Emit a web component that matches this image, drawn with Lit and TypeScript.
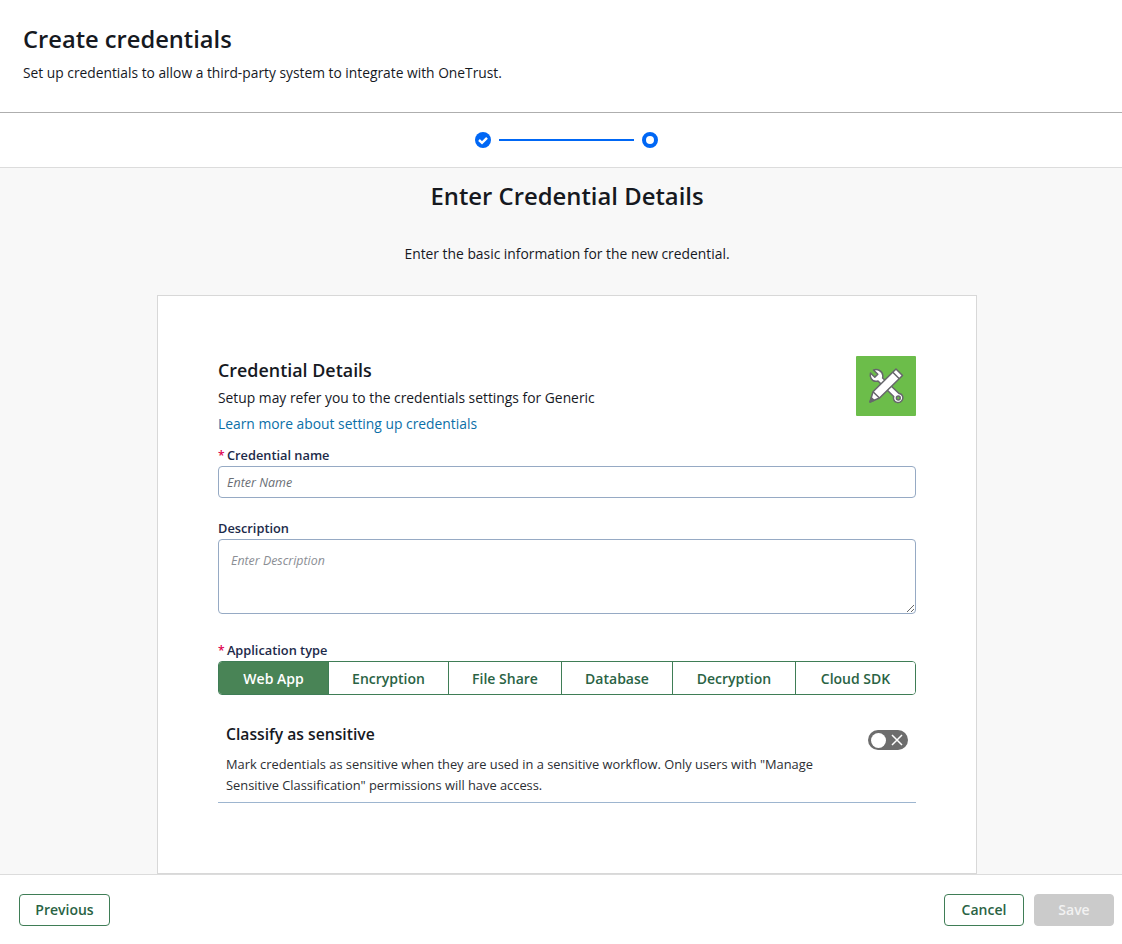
import { LitElement, html, css } from 'lit';
import { customElement, state } from 'lit/decorators.js';

const APP_TYPES = ['Web App', 'Encryption', 'File Share', 'Database', 'Decryption', 'Cloud SDK'];
const TAB_WIDTHS = [109, 120, 113, 111, 123, 120];

@customElement('app-root')
export class AppRoot extends LitElement {
  @state() appType = 'Web App';

  static styles = css`
    :host {
      display: flex;
      flex-direction: column;
      height: 944px;
      overflow: hidden;
      background: #fff;
      color: #16191f;
      font-family: 'Open Sans', 'Noto Sans', sans-serif;
      font-size: 13.85px;
    }
    * { box-sizing: border-box; }

    .header {
      height: 113px;
      padding: 24px 23px 0;
      border-bottom: 1px solid #aeaeae;
      flex: none;
    }
    .header h1 {
      margin: 0;
      font-size: 23.7px;
      line-height: 30px;
      font-weight: 600;
    }
    .header p {
      margin: 7px 0 0;
      line-height: 24px;
      font-size: 13.8px;
    }

    .stepper {
      height: 55px;
      flex: none;
      border-bottom: 1px solid #dcdcdc;
      display: flex;
      align-items: center;
      justify-content: center;
      gap: 8px;
      padding-left: 11px;
    }
    .stepper svg { display: block; }
    .step-line { width: 135px; height: 2px; background: #0067f5; }

    .body {
      flex: 1;
      min-height: 0;
      overflow: hidden;
      background: #f8f8f8;
      display: flex;
      flex-direction: column;
      align-items: center;
      padding-left: 12px;
    }
    .body h2 {
      margin: 12px 0 0;
      font-size: 23.85px;
      line-height: 32px;
      font-weight: 600;
    }
    .intro {
      margin: 30px 0 0;
      line-height: 24px;
    }

    .card {
      width: 820px;
      margin-top: 29px;
      flex: none;
      background: #fff;
      border: 1px solid #d8d8d8;
      padding: 60px 60px 70px;
    }
    .card-top {
      display: flex;
      justify-content: space-between;
      align-items: flex-start;
    }
    .card-top h3 {
      margin: 0;
      font-size: 17.9px;
      line-height: 28px;
      font-weight: 600;
    }
    .card-top p { margin: 2px 0 0; line-height: 24px; }
    .card-top a {
      display: block;
      margin-top: 2px;
      line-height: 24px;
      color: #0b6fa8;
      text-decoration: none;
    }
    .tile {
      width: 60px;
      height: 60px;
      background: #6cbd4a;
      border-radius: 1px;
      display: flex;
      align-items: center;
      justify-content: center;
    }

    label {
      display: block;
      font-size: 12.8px;
      line-height: 18px;
      font-weight: 600;
      color: #1c2a4a;
    }
    label .req { color: #e0004d; font-size: 12px; margin-right: -1px; }
    .name-field { margin-top: 10px; }
    .name-input {
      display: block;
      width: 100%;
      height: 32px;
      margin-top: 1px;
      padding: 0 8px;
      border: 1px solid #96aac4;
      border-radius: 4px;
      font: italic 12.5px 'Open Sans', sans-serif;
      color: #16191f;
      background: #fff;
      outline: none;
    }
    .name-input::placeholder { color: #6b6f76; opacity: 1; }
    .desc-field { margin-top: 21px; }
    .desc-input {
      display: block;
      width: 100%;
      height: 75px;
      margin-top: 2px;
      padding: 12px 12px;
      border: 1px solid #96aac4;
      border-radius: 4px;
      font: italic 12.4px 'Open Sans', sans-serif;
      background: #fff;
      outline: none;
    }
    .desc-input::placeholder { color: #8b8e94; opacity: 1; }

    .type-field { margin-top: 27px; }
    .tabs {
      display: flex;
      height: 34px;
      margin-top: 1px;
      border: 1px solid #3f7d56;
      border-radius: 4px;
      overflow: hidden;
    }
    .tab {
      border: 0;
      border-left: 1px solid #3f7d56;
      background: #fff;
      color: #2a6344;
      font: 600 14px 'Open Sans', sans-serif;
      padding: 0;
      flex: none;
    }
    .tab:first-child { border-left: 0; }
    .tab.active { background: #498456; color: #fff; }

    .sensitive {
      margin-top: 25px;
      padding: 0 8px 7px;
      border-bottom: 1px solid #9db5cf;
      position: relative;
    }
    .sensitive h4 {
      margin: 0;
      font-size: 15.7px;
      line-height: 28px;
      font-weight: 600;
    }
    .sensitive p {
      margin: 6px 0 0;
      width: 620px;
      font-size: 12.85px;
      line-height: 20.500px;
      color: #2b2e33;
    }
    .toggle {
      position: absolute;
      top: 10px;
      right: 8px;
      width: 40px;
      height: 20px;
      border-radius: 10px;
      background: #6d6d6d;
    }
    .toggle i {
      position: absolute;
      left: 3px;
      top: 3px;
      width: 15px;
      height: 15px;
      border-radius: 50%;
      background: #fff;
    }
    .toggle svg { position: absolute; left: 23px; top: 4px; }

    .footer {
      height: 70px;
      flex: none;
      background: #fff;
      border-top: 1px solid #dcdcdc;
      display: flex;
      align-items: center;
      justify-content: space-between;
      padding: 0 8px 0 19px;
    }
    .footer .right { display: flex; gap: 10px; }
    .btn {
      height: 32px;
      border-radius: 4px;
      border: 1px solid #3f7d56;
      background: #fff;
      color: #2a6344;
      font: 600 14px 'Open Sans', sans-serif;
      padding: 0;
    }
    .btn.prev { width: 91px; }
    .btn.cancel { width: 80px; }
    .btn.save { width: 80px; background: #cbcbcb; border-color: #cbcbcb; color: #f2f2f2; }
  `;

  private renderTile() {
    return html`<svg width="36" height="36" viewBox="0 0 36 36">
      <g fill="#fff" stroke="#66676b" stroke-width="1.5" stroke-linejoin="round">
        <!-- wrench -->
        <path d="M2.500 5 6.800 9.300 9.800 6.300 5.500 2C9.500.5 14.300 3 14.800 7.500 14.900 8.500 14.800 9.300 14.600 10L31 25.500C33.700 25.700 35.300 28.300 34.800 30.700 34.200 33.500 31.400 35.100 28.800 34.400 26.100 33.600 24.800 30.900 25.700 28.500L10 13C7.300 13.800 4.500 12.800 3.200 10.600 2.300 9 2 6.800 2.500 5Z"/>
        <circle cx="30.300" cy="30" r="1.900" fill="#6cbd4a"/>
        <!-- pencil -->
        <path d="M28 1 34.500 7.500 11.500 30 2 34 5 23.700Z"/>
        <path d="M24.800 4.200 31.300 10.700M5 23.700 11.500 30" fill="none"/>
        <path d="M2 34 3.400 29.800 6 32.300Z" fill="#66676b"/>
      </g>
    </svg>`;
  }

  render() {
    return html`
      <div class="header">
        <h1>Create credentials</h1>
        <p>Set up credentials to allow a third-party system to integrate with OneTrust.</p>
      </div>
      <div class="stepper">
        <svg width="16" height="16" viewBox="0 0 16 16">
          <circle cx="8" cy="8" r="8" fill="#0067f5"/>
          <path d="M4 8 7 10.800 12 5.800" fill="none" stroke="#fff" stroke-width="2.400"/>
        </svg>
        <div class="step-line"></div>
        <svg width="16" height="16" viewBox="0 0 16 16">
          <circle cx="8" cy="8" r="6" fill="#fff" stroke="#0067f5" stroke-width="4"/>
        </svg>
      </div>
      <div class="body">
        <h2>Enter Credential Details</h2>
        <p class="intro">Enter the basic information for the new credential.</p>
        <div class="card">
          <div class="card-top">
            <div>
              <h3>Credential Details</h3>
              <p>Setup may refer you to the credentials settings for Generic</p>
              <a href="#">Learn more about setting up credentials</a>
            </div>
            <div class="tile">${this.renderTile()}</div>
          </div>
          <div class="name-field">
            <label><span class="req">*</span> Credential name</label>
            <input class="name-input" placeholder="Enter Name" />
          </div>
          <div class="desc-field">
            <label>Description</label>
            <textarea class="desc-input" placeholder="Enter Description"></textarea>
          </div>
          <div class="type-field">
            <label><span class="req">*</span> Application type</label>
            <div class="tabs">
              ${APP_TYPES.map(
                (t, i) => html`<button
                  class="tab ${t === this.appType ? 'active' : ''}"
                  style="width:${TAB_WIDTHS[i]}px"
                  @click=${() => (this.appType = t)}
                >${t}</button>`
              )}
            </div>
          </div>
          <div class="sensitive">
            <h4>Classify as sensitive</h4>
            <p>Mark credentials as sensitive when they are used in a sensitive workflow. Only users with "Manage Sensitive Classification" permissions will have access.</p>
            <div class="toggle">
              <i></i>
              <svg width="12" height="12" viewBox="0 0 12 12">
                <path d="M1 1 11 11M11 1 1 11" stroke="#fff" stroke-width="1.500"/>
              </svg>
            </div>
          </div>
        </div>
      </div>
      <div class="footer">
        <button class="btn prev">Previous</button>
        <div class="right">
          <button class="btn cancel">Cancel</button>
          <button class="btn save">Save</button>
        </div>
      </div>
    `;
  }
}
